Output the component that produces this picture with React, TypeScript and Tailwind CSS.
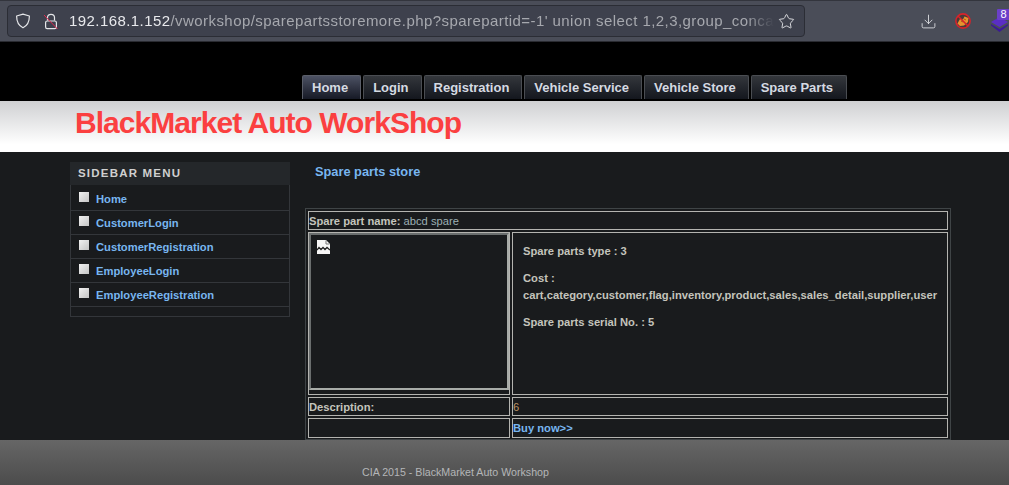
import { Download, Star } from "lucide-react";

const tabs = ["Home", "Login", "Registration", "Vehicle Service", "Vehicle Store", "Spare Parts"];
const sideLinks = ["Home", "CustomerLogin", "CustomerRegistration", "EmployeeLogin", "EmployeeRegistration"];

function BrowserBar() {
  return (
    <div className="flex h-[42px] items-center bg-[#4a4d58] border-t border-[#33353d] border-b border-b-[#2a2b31] pl-[7px]">
      <div className="flex h-[32px] w-[798px] items-center rounded-[4px] border border-[#2b2d35] bg-[#3e414d]">
        {/* shield */}
        <svg width="16" height="16" viewBox="0 0 16 16" fill="none" stroke="#e4e5e8" strokeWidth="1.2" className="ml-[7px] shrink-0">
          <path d="M8 1.2 L14.4 3 C14.4 9 12.5 12.6 8 14.8 C3.5 12.6 1.6 9 1.6 3 Z" strokeLinejoin="round" />
        </svg>
        {/* lock, crossed out */}
        <svg width="16" height="18" viewBox="0 0 16 18" fill="none" className="ml-[12px] shrink-0">
          <path d="M4.5 8.5 V5.5 C4.5 1.2 11.5 1.2 11.5 5.5 V8.5" stroke="#e4e5e8" strokeWidth="1.2" />
          <rect x="2.6" y="9" width="10.8" height="7.6" rx="1.6" stroke="#e4e5e8" strokeWidth="1.2" />
          <path d="M1 3 L14.5 17" stroke="#e22850" strokeWidth="1" />
        </svg>
        <div className="ml-[10px] w-[705px] overflow-hidden whitespace-nowrap text-[15px] leading-[18px] text-[#a6a8ae] [font-family:'Liberation_Sans',sans-serif] tracking-[0.43px] [mask-image:linear-gradient(to_right,black_96%,transparent)]">
          <span className="text-[#e8e9ec]">192.168.1.152</span>
          /vworkshop/sparepartsstoremore.php?sparepartid=-1' union select 1,2,3,group_conca
        </div>
        <Star size={17} strokeWidth={1.3} color="#e4e5e8" className="ml-[4px] shrink-0" />
      </div>
      <Download size={17} strokeWidth={1.2} color="#e4e5e8" className="ml-[115px] shrink-0" />
      {/* extension icon */}
      <svg width="16" height="16" viewBox="0 0 16 16" className="ml-[18px] shrink-0">
        <circle cx="8" cy="8" r="7.1" fill="#4a3a38" stroke="#d8232a" strokeWidth="1.6" />
        <path d="M2.5 10.5 L5 6 L8 6.5 L9.5 3.5 L13.5 5 L13 9 L9 12.5 L5 13 Z" fill="#e8922e" />
        <path d="M6 8 L8 9 M9 6 L11 7" stroke="#a85a16" strokeWidth="1" />
        <path d="M3 3 L13 13" stroke="#d8232a" strokeWidth="1.6" />
      </svg>
      {/* extension with badge */}
      <div className="relative ml-[20px] h-[16px] w-[17px] shrink-0">
        <svg width="17" height="15" viewBox="0 0 17 15" className="absolute left-0 top-[4px]">
          <path d="M8.5 0 L17 5 L8.5 10 L0 5 Z" fill="#5a2ec4" />
          <path d="M0 7 L8.5 12 L17 7 L17 8.5 L8.5 15 L0 8.5 Z" fill="#3b1a96" />
        </svg>
        <span className="absolute left-[6px] top-[-4px] flex h-[11px] w-[13px] items-center justify-center rounded-[1px] bg-[#6b3fc9] text-[11px] leading-none text-white [font-family:'Liberation_Sans',sans-serif]">
          8
        </span>
      </div>
    </div>
  );
}

function TopNav() {
  return (
    <div className="flex h-[59px] items-start gap-[2px] bg-black pl-[302px] pt-[33px]">
      {tabs.map((tab, i) => (
        <div
          key={tab}
          className={
            i === 0
              ? "flex h-[24px] items-center rounded-t-[2px] border border-b-0 border-[#5a5e68] bg-gradient-to-b from-[#4d5264] to-[#171a26] pl-[9px] pr-[12px] text-[13px] font-bold text-[#d5dae2]"
              : "flex h-[24px] items-center rounded-t-[2px] border border-b-0 border-[#4a4d52] bg-gradient-to-b from-[#34373c] to-[#14171e] pl-[9px] pr-[12px] text-[13px] font-bold text-[#d5dae2] last:pr-[13px]"
          }
        >
          {tab}
        </div>
      ))}
    </div>
  );
}

function Sidebar() {
  return (
    <div className="mt-[10px] w-[220px] shrink-0">
      <div className="flex h-[23px] items-center bg-[#24272a] pl-[8px] text-[11.5px] font-bold tracking-[1.2px] text-[#d0d0d0]">
        SIDEBAR MENU
      </div>
      <div className="border border-t-0 border-[#33363a] pb-[9px] pt-[2px]">
        {sideLinks.map((link) => (
          <div key={link} className="flex h-[24px] items-center border-b border-[#33363a] pl-[8px] pt-[2px] text-[11.2px] font-bold text-[#78b6f0]">
            <span className="mb-[5px] mr-[7px] h-[10px] w-[10px] bg-gradient-to-br from-[#f2f2f2] to-[#c4c4c4]" />
            {link}
          </div>
        ))}
      </div>
    </div>
  );
}

function BrokenImage() {
  return (
    <svg width="13" height="14" viewBox="0 0 13 14">
      <path d="M0 0 H9 L13 4 V14 H0 Z" fill="#f6f6f6" />
      <path d="M9 0.5 V4 H12.5" fill="none" stroke="#777" strokeWidth="1" />
      <path d="M0 10 L2 7.5 L4 9.5 L6 7.5 L8 9.5 L10 7.5 L13 10" fill="none" stroke="#222" strokeWidth="1.3" />
    </svg>
  );
}

function PartTable() {
  const cell = "border border-[#b4b4b0] p-0 align-top";
  return (
    <div className="ml-[15px] mt-[29px] h-[232px] w-[646px] border border-[#3f4446]">
      <table className="w-[644px] table-fixed border-separate border-spacing-[2px] text-[11.2px] leading-[14px] text-[#c4c4bc]">
        <colgroup>
          <col className="w-[202px]" />
          <col />
        </colgroup>
        <tbody>
          <tr>
            <td colSpan={2} className={`${cell} h-[19px] pt-[2px]`}>
              <b>Spare part name:</b> <span className="text-[#9db0b4]">abcd spare</span>
            </td>
          </tr>
          <tr>
            <td className={`${cell} h-[163px]`}>
              <div className="h-[157px] border-2 border-[#6a6e6e] border-b-[#a8aca8] border-r-[#a8aca8] pl-[6px] pt-[5px]">
                <BrokenImage />
              </div>
            </td>
            <td className={`${cell} pl-[10px] pt-[12px] font-bold leading-[13px]`}>
              <p>Spare parts type : 3</p>
              <p className="mt-[14px]">Cost :</p>
              <p className="mt-[4px] tracking-[0.013px]">cart,category,customer,flag,inventory,product,sales,sales_detail,supplier,user</p>
              <p className="mt-[14px]">Spare parts serial No. : 5</p>
            </td>
          </tr>
          <tr>
            <td className={`${cell} h-[19px] pt-[2px] font-bold`}>Description:</td>
            <td className={`${cell} pt-[2px] text-[#bd9465]`}>6</td>
          </tr>
          <tr>
            <td className={`${cell} h-[20px]`} />
            <td className={`${cell} pt-[2px] font-bold text-[#78b6f0]`}>Buy now&gt;&gt;</td>
          </tr>
        </tbody>
      </table>
    </div>
  );
}

export default function App() {
  return (
    <div className="flex h-[485px] w-[1009px] flex-col overflow-hidden bg-[#191b1d] [font-family:'Liberation_Sans',Arial,sans-serif]">
      <BrowserBar />
      <TopNav />
      <div className="flex h-[51px] items-center bg-gradient-to-b from-[#cfd0d2] via-[#ffffff] via-85% to-[#ffffff] pb-[8px] pl-[75px]">
        <h1 className="text-[30px] font-bold tracking-[-0.96px] text-[#fb4040]">BlackMarket Auto WorkShop</h1>
      </div>
      <div className="flex h-[288px] pl-[70px]">
        <Sidebar />
        <div className="flex-1">
          <div className="ml-[10px] mt-[12px] pl-[15px] text-[12.8px] font-bold leading-[15px] text-[#78b6f0]">Spare parts store</div>
          <PartTable />
        </div>
      </div>
      <div className="flex-1 bg-gradient-to-b from-[#666666] to-[#4c4c4c] pl-[362px] pt-[26px] text-[10.67px] leading-[13px] text-[#b4b6b8]">
        CIA 2015 - BlackMarket Auto Workshop
      </div>
    </div>
  );
}
